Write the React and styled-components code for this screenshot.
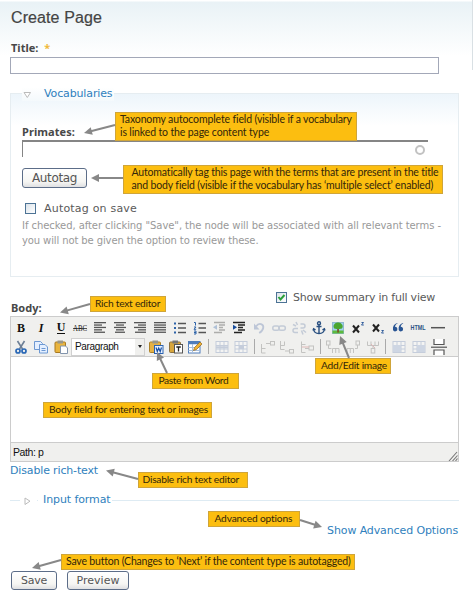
import React from 'react';
import styled, { createGlobalStyle } from 'styled-components';

const Global = createGlobalStyle`
  * { box-sizing: border-box; }
  body { margin: 0; background: #fff; }
`;

const sans = '"DejaVu Sans", Verdana, sans-serif';

const Page = styled.main`
  position: relative;
  width: 473px;
  height: 600px;
  overflow: hidden;
  padding: 8px 14px 0 10px;
  font-family: ${sans};
  background: linear-gradient(#fff 0, #fff 1px, #e9f2f6 2px, #fff 56px);
`;

const EdgeLine = styled.div`
  position: absolute;
  right: 0;
  top: 0;
  width: 1px;
  height: 70px;
  background: #d9e0e4;
`;

const Heading = styled.h1`
  margin: 0;
  padding-left: 1px;
  font: 400 16px/20px "Liberation Sans", Arial, sans-serif;
  letter-spacing: 0.1px;
  color: #444;
  -webkit-text-stroke: 0.2px #444;
`;

const Label = styled.div`
  font: 700 11px/14px "Noto Sans", Verdana, sans-serif;
  letter-spacing: ${p => p.$ls || 0}px;
  color: #484848;
  padding-left: ${p => p.$pad ?? 1}px;
  margin-top: ${p => p.$mt || 0}px;
`;

const Star = styled.span`
  color: #f0b93a;
  margin-left: 3px;
`;

const TitleInput = styled.div`
  width: 429px;
  height: 17px;
  margin-top: 2px;
  border: 1px solid #a3a8b8;
  background: #fff;
`;

const Fieldset = styled.section`
  width: 449px;
  height: 184px;
  margin-top: 19px;
  padding: 0 11px;
  border: 1px solid #e6edf1;
  background: linear-gradient(#edf5fb, #fff 32px);
`;

const Legend = styled.div`
  display: flex;
  align-items: center;
  width: 92px;
  height: 14px;
  margin-top: -7px;
  gap: 13px;
  background: linear-gradient(#fff, #f4f9fc);
`;

const Marker = styled.svg`
  display: block;
  width: 8px;
  height: 8px;
  margin: 1px 0 0 1px;
`;

const Link = styled.a`
  font: 11px/14px ${sans};
  letter-spacing: ${p => p.$ls || 0}px;
  color: #2f7fbd;
  white-space: nowrap;
`;

const AutoInput = styled.div`
  display: flex;
  justify-content: flex-end;
  align-items: center;
  width: 406px;
  height: 17px;
  margin-top: 1px;
  padding: 1px 3px 0 0;
  border-top: 2px solid #858585;
  border-left: 1px solid #858585;
  background: #fff;
`;

const Throbber = styled.div`
  width: 10px;
  height: 10px;
  border: 2px solid #c2c2c2;
  border-radius: 50%;
`;

const Button = styled.button`
  display: block;
  width: ${p => p.$w}px;
  height: ${p => p.$h || 19}px;
  margin: ${p => p.$mt || 0}px 0 0;
  padding: 0;
  border: 1px solid #5c6d88;
  border-radius: 3px;
  background: linear-gradient(#fff, #f6f6f3 70%, #dfe0e2);
  font: ${p => p.$size || 11}px/15px ${sans};
  letter-spacing: ${p => p.$ls || 0}px;
  color: #555;
`;

const CheckRow = styled.label`
  display: flex;
  align-items: center;
  gap: ${p => p.$gap}px;
  height: 14px;
  margin-top: ${p => p.$mt || 0}px;
  padding-left: ${p => p.$pad || 0}px;
  font: 11px/14px ${sans};
  letter-spacing: ${p => p.$ls || 0}px;
  color: #5a5a5a;
  white-space: nowrap;
`;

const Box = styled.svg`
  display: block;
  width: 11px;
  height: 11px;
  border: 1px solid #4c7395;
  background: linear-gradient(135deg, #dbe3ea, #fff);
  margin-bottom: 1px;
`;

const Help = styled.p`
  margin: 3px 0 0;
  font: 10px/14.5px ${sans};
  color: #999;
  white-space: nowrap;
`;

const HelpLine = styled.span`
  display: block;
  letter-spacing: ${p => p.$ls}px;
`;

const BodyHead = styled.div`
  display: flex;
  justify-content: space-between;
  width: 425px;
  height: 25px;
  margin-top: 14px;
`;

const Editor = styled.section`
  display: flex;
  flex-direction: column;
  width: 449px;
  height: 146px;
  border: 1px solid #ccc;
  background: #fff;
`;

const Toolbar = styled.div`
  height: 40px;
  padding-top: 1px;
  background: #f0f0ee;
  border-bottom: 1px solid #ccc;
`;

const ToolRow = styled.div`
  display: flex;
  align-items: center;
  height: 19px;
`;

const Tool = styled.svg`
  flex: none;
  width: 16px;
  height: 16px;
  margin: 0 ${p => p.$m ?? 1.93}px;
  opacity: ${p => (p.$off ? 0.32 : 1)};
`;

const Separator = styled.i`
  flex: none;
  width: 1px;
  height: 15px;
  margin: 0 2.7px;
  background: #aaa;
`;

const Select = styled.div`
  display: flex;
  align-items: center;
  justify-content: space-between;
  flex: none;
  width: 74px;
  height: 18px;
  margin-right: 1px;
  padding-left: 3px;
  border: 1px solid #d0d0d0;
  background: #fff;
  font: 10px/14px "Liberation Sans", Tahoma, sans-serif;
  letter-spacing: -0.35px;
  color: #111;
`;

const DropArrow = styled.span`
  display: flex;
  align-items: center;
  justify-content: center;
  width: 9px;
  height: 16px;
  background: #f0f0ee;
  &::after {
    content: '';
    border: 2px solid transparent;
    border-top: 3px solid #222;
    border-bottom: 0;
  }
`;

const Writing = styled.div`
  flex: 1;
`;

const Status = styled.div`
  display: flex;
  justify-content: space-between;
  align-items: flex-end;
  height: 19px;
  padding-left: 2px;
  border-top: 1px solid #ccc;
  background: #f0f0ee;
  font: 10.5px/17px "Liberation Sans", Tahoma, sans-serif;
  letter-spacing: -0.4px;
  color: #111;
`;

const Grip = styled.svg`
  width: 10px;
  height: 10px;
`;

const LinkLine = styled.div`
  display: flex;
  justify-content: ${p => (p.$end ? 'flex-end' : 'flex-start')};
  width: 448px;
  height: 14px;
  margin-top: ${p => p.$mt}px;
`;

const Collapsed = styled.div`
  display: flex;
  align-items: center;
  width: 449px;
  height: 14px;
  margin-top: 15px;
`;

const Rule = styled.i`
  height: 1px;
  width: ${p => p.$w || 'auto'};
  flex: ${p => (p.$w ? 'none' : 1)};
  margin: 0 ${p => p.$r || 0}px 0 ${p => p.$l || 0}px;
  background: #deebf3;
`;

const Actions = styled.div`
  display: flex;
  gap: 10px;
  margin: 33px 0 0 1px;
`;

const Note = styled.aside`
  position: absolute;
  left: ${p => p.$x}px;
  top: ${p => p.$y}px;
  width: ${p => p.$w}px;
  height: ${p => p.$h || 16}px;
  padding-left: ${p => p.$pad}px;
  border: 1px solid #cfa53a;
  background: #fcbe10;
  font: ${p => p.$size || 10.2}px/13px Lato, "Open Sans", sans-serif;
  color: #33260a;
  white-space: nowrap;
`;

const NoteLine = styled.span`
  display: block;
  letter-spacing: ${p => p.$ls}px;
`;

const Arrows = styled.svg`
  position: absolute;
  left: 0;
  top: 0;
  width: 473px;
  height: 600px;
  pointer-events: none;
`;

const bars = (list, color = '#555') =>
  list.map(([x, w], i) => <rect key={i} x={x} y={2 + i * 2.4} width={w} height="1.3" fill={color} />);

const Serif = ({ children, ...rest }) => (
  <text x="8" y="12" textAnchor="middle" fontFamily="Liberation Serif, serif" fontWeight="700" fontSize="12" fill="#111" {...rest}>{children}</text>
);

const grid = (x, y) => (
  <g fill="#fff" stroke="#6d86b5" strokeWidth="1">
    <rect x={x} y={y} width="12" height="11" />
    <path d={`M${x} ${y + 4}h12M${x} ${y + 7.5}h12M${x + 4} ${y}v11M${x + 8} ${y}v11`} />
  </g>
);

const art = {
  bold: <Serif>B</Serif>,
  italic: <Serif fontStyle="italic">I</Serif>,
  underline: <><Serif y="11">U</Serif><path d="M4 13.5h8" stroke="#111" /></>,
  strike: <><Serif fontSize="7.5" y="10.8" textLength="14" lengthAdjust="spacingAndGlyphs" fontWeight="400">ABC</Serif><path d="M1 8.5h14" stroke="#111" strokeWidth=".7" /></>,
  left: bars([[2, 12], [2, 8], [2, 12], [2, 8], [2, 11]]),
  center: bars([[2, 12], [4, 8], [2, 12], [4, 8], [3, 10]]),
  right: bars([[2, 12], [6, 8], [2, 12], [6, 8], [3, 11]]),
  full: bars([[2, 12], [2, 12], [2, 12], [2, 12], [2, 12]]),
  bullets: <><path d="M6 3.5h8M6 8h8M6 12.5h8" stroke="#555" strokeWidth="1.3" /><path d="M2 2.5h2v2H2zM2 7h2v2H2zM2 11.5h2v2H2z" fill="#2c62a8" /></>,
  numbers: <><path d="M6.5 3.5H14M6.5 8H14M6.5 12.5H14" stroke="#555" strokeWidth="1.3" /><path d="M2 2.5h1.5v3M2 7h2L2 9.3h2.2M2 11h2v3H2M2 12.5h2" stroke="#2c62a8" fill="none" /></>,
  outdent: <><path d="M3 2.5h11M8 5h6M8 7.5h4M8 10h6M3 12.5h8" stroke="#222" strokeWidth="1.5" /><path d="M6 4.8v5L2 7.3z" fill="#2c62a8" /></>,
  indent: <><path d="M2 2.5h12M7 5h7M7 7.5h5M7 10h7M3 12.5h8" stroke="#222" strokeWidth="1.5" /><path d="M2 4.8v5l4-2.5z" fill="#174c9c" /></>,
  undo: <><path d="M5 6.5C8 2 13 4 12.2 8c-.4 2.3-2 3.8-4 5" stroke="#5570a8" strokeWidth="1.8" fill="none" /><path d="M3 3.5v6h5.5z" fill="#5570a8" /></>,
  link: <g stroke="#687fa8" strokeWidth="1.5" fill="none"><rect x="1.8" y="6" width="6.5" height="4.2" rx="2" /><rect x="7.8" y="6" width="6.5" height="4.2" rx="2" /></g>,
  unlink: <g stroke="#687fa8" strokeWidth="1.5" fill="none"><path d="M7 8.5H4a2 2 0 0 0 0 4h3M9.5 4H12a2 2 0 0 1 0 4H9.5M5 2l1.5 3M2 4.5L5 6M10.5 10.5l1.5 4M12 10l3 2.5" /></g>,
  anchor: <g stroke="#284f80" strokeWidth="1.4" fill="none"><circle cx="8" cy="3.3" r="1.5" /><path d="M8 5v8.5M5.5 6.5h5M2.5 9c.3 3 2.5 4.5 5.5 4.5s5.2-1.5 5.5-4.5M2 10.5l.6-1.8 1.9 1.2M14 10.5l-.6-1.8-1.9 1.2" /></g>,
  image: <><rect x="2.5" y="2.5" width="11" height="11" fill="#9fd0f0" stroke="#8fb8cf" /><path d="M2.5 10.5h11V13.500h-11z" fill="#5dbb3c" /><path d="M7.200 8h1.700v4.500H7.200z" fill="#7b5227" /><path d="M3.500 6.500C3.500 4 6 2.500 8 2.500s4.700 1.500 4.700 4S10 9 8 9 3.500 9 3.500 6.500z" fill="#4aa52f" /></>,
  sup: <><path d="M3 5.5l6 7M9 5.5l-6 7" stroke="#222" strokeWidth="2" /><path d="M11.5 2.5h2l-2 2.5h2.3" stroke="#315d9c" fill="none" /></>,
  sub: <><path d="M3 4.5l6 7M9 4.5l-6 7" stroke="#222" strokeWidth="2" /><path d="M11.5 10.5h2l-2 2.5h2.3" stroke="#315d9c" fill="none" /></>,
  quote: <g fill="#285493"><path d="M7.3 3C4 4 2.5 6.5 3 10a2.3 2.3 0 1 0 2-3.2C5.200 5.300 6 4.200 7.500 3.600z" /><path d="M13 3C9.700 4 8.200 6.500 8.700 10a2.300 2.300 0 1 0 2-3.200c.2-1.500 1-2.600 2.500-3.200z" /></g>,
  html: <text x="8" y="10.3" textAnchor="middle" textLength="15" lengthAdjust="spacingAndGlyphs" fontFamily="Liberation Sans, sans-serif" fontWeight="700" fontSize="6.5" fill="#2c5585">HTML</text>,
  hr: <path d="M1 7.7h14" stroke="#555" strokeWidth="1.5" />,
  cut: <><path d="M4.5 2l5 8M11.5 2l-5 8" stroke="#6d7f96" strokeWidth="1.6" /><g fill="none" stroke="#2866b5" strokeWidth="1.7"><circle cx="5" cy="12" r="2" /><circle cx="11" cy="12" r="2" /></g></>,
  copy: <g fill="#e4efff" stroke="#6d98d2"><path d="M1.5 2.5h6l2 2v6h-8z" /><path d="M6.5 5.5h5.5l2.5 2.5v6h-8z" /><path d="M8.5 9.5h4M8.5 11.5h4" /></g>,
  paste: <><rect x="2" y="3" width="10.5" height="10.5" rx="1" fill="#eab53e" stroke="#a87920" /><rect x="4.5" y="1.5" width="5.5" height="3" fill="#99978b" /><path d="M7.5 7h5l2 2v5.5h-7z" fill="#fff" stroke="#8294ac" /></>,
  pasteWord: <><rect x="1.5" y="3" width="11" height="10.5" rx="1" fill="#e6b244" stroke="#ab8128" /><rect x="4.5" y="1.5" width="5.5" height="3" fill="#99978b" /><rect x="6.5" y="6.5" width="8.5" height="8" fill="#e9f2ff" stroke="#2b62b0" /><path d="M8 8.5l1.3 4 1.4-3.5 1.5 3.5 1.3-4" stroke="#174fa5" strokeWidth="1.2" fill="none" /></>,
  pasteText: <><rect x="1.5" y="3" width="11" height="10.5" rx="1" fill="#d8a63c" stroke="#8c7140" /><rect x="4.5" y="1.5" width="5.5" height="3" fill="#777" /><rect x="6.5" y="5.5" width="8" height="8.5" fill="#fff" stroke="#555" /><path d="M8.3 8h4.500M10.500 8v4.500" stroke="#222" strokeWidth="1.3" /></>,
  editTable: <><rect x="1.5" y="2.5" width="11.5" height="11.5" fill="#fff" stroke="#4f7dbb" /><path d="M1.5 4h11.5" stroke="#4f7dbb" strokeWidth="2.5" /><path d="M1.5 8.5H13M1.5 11.5H13M5.5 5v9" stroke="#a8bfdc" /><path d="M6.5 11.5l1-3L13 3l2 2-5.500 5.500z" fill="#efb333" stroke="#94641b" strokeWidth=".7" /></>,
  rowProps: <>{grid(2, 2.5)}<path d="M2 8.3h12" stroke="#6d86b5" strokeWidth="2" /></>,
  cellProps: <>{grid(2, 2.5)}<rect x="6" y="6" width="5" height="4" fill="#6d86b5" /></>,
  rowBefore: <g fill="none" stroke="#666"><path d="M1.5 5v9h4M1.5 9.5h4M6 4.5h4" /><rect x="10.5" y="2.5" width="4" height="3.5" /></g>,
  rowAfter: <g fill="none" stroke="#666"><path d="M1.5 2v8.5h4M1.5 6.5h4v-4M6 12h4" /><rect x="10.5" y="10.5" width="4" height="3.5" /></g>,
  rowDelete: <g fill="none" stroke="#666"><path d="M2.5 2.5v11h4M2.5 5.5h4M6 9.5h4" /><rect x="10" y="7" width="4.5" height="4" /><path d="M3 8h7" stroke="#b44" /></g>,
  colBefore: <g fill="none" stroke="#666"><rect x="1.5" y="2" width="3.5" height="4" /><path d="M3.5 6v3.5h3M7.5 14v-4.5h6.5v4.5M10.7 9.5v4.5" /></g>,
  colAfter: <g fill="none" stroke="#666"><rect x="11" y="2" width="3.5" height="4" /><path d="M12.5 6v3.5H10M2 14v-4.5h6.5v4.5M5.3 9.5v4.5" /></g>,
  colDelete: <g fill="none" stroke="#666"><path d="M2.5 2.5v4h11v-4M6 2.5v4M10 2.5v4M8 6.5v3" /><rect x="6.2" y="9.5" width="3.6" height="4.5" /><path d="M6 5l4 4" stroke="#b44" /></g>,
  split: <>{grid(2, 2.5)}<rect x="2" y="6" width="8" height="7" fill="#8aa1cd" /></>,
  merge: <>{grid(2, 2.5)}<rect x="6" y="6" width="8" height="7" fill="#8aa1cd" /></>,
  pageBreak: <g fill="#fff" stroke="#555" strokeWidth="1.2"><path d="M3 0v5.5h10V0M3 16v-5h10v5" /><path d="M0 8.2h16" /></g>,
};

const rowOne = ['bold', 'italic', 'underline', 'strike', 'left', 'center', 'right', 'full', 'bullets', 'numbers', '-outdent', 'indent', '-undo', '-link', '-unlink', 'anchor', 'image', 'sup', 'sub', 'quote', 'html', 'hr'];

const Icon = ({ name, m }) => {
  const off = name[0] === '-';
  return <Tool viewBox="0 0 16 16" $off={off} $m={m}>{art[off ? name.slice(1) : name]}</Tool>;
};

const icons = (names, m) => names.map(n => <Icon key={n} name={n} m={m} />);

const notes = [
  { x: 115, y: 112, w: 242, h: 29, pad: 4, size: 10.5, lines: [['Taxonomy autocomplete field (visible if a vocabulary', -0.135], ['is linked to the page content type', -0.13]] },
  { x: 123, y: 165, w: 320, h: 29, pad: 7.5, size: 10.5, lines: [['Automatically tag this page with the terms that are present in the title', -0.17], ['and body field (visible if the vocabulary has ‘multiple select’ enabled)', -0.15]] },
  { x: 90, y: 296, w: 76, pad: 4, lines: [['Rich text editor', -0.23]] },
  { x: 152, y: 373, w: 87, pad: 5.5, lines: [['Paste from Word', -0.4]] },
  { x: 43, y: 402, w: 169, pad: 5, lines: [['Body field for entering text or images', -0.18]] },
  { x: 315, y: 358, w: 76, pad: 5, lines: [['Add/Edit image', -0.25]] },
  { x: 138, y: 472, w: 110, pad: 3.5, lines: [['Disable rich text editor', -0.22]] },
  { x: 208, y: 511, w: 92, pad: 5.5, lines: [['Advanced options', -0.16]] },
  { x: 61, y: 554, w: 294, pad: 4, size: 10.5, lines: [['Save button (Changes to ‘Next’ if the content type is autotagged)', -0.19]] },
];

const pointers = [
  [115, 125, 84, 133],
  [123, 178, 91, 178],
  [90, 304, 60, 312.5],
  [167, 373, 157, 352],
  [349, 358, 340, 336],
  [138, 479, 106, 470.5],
  [300, 520, 322, 527],
  [61, 560, 32, 568],
];

const Pointer = ({ from: [x1, y1, x2, y2] }) => {
  const len = Math.hypot(x2 - x1, y2 - y1);
  const angle = (Math.atan2(y2 - y1, x2 - x1) * 180) / Math.PI;
  return (
    <g transform={`translate(${x1} ${y1}) rotate(${angle})`} fill="#888">
      <rect y="-1" width={len - 5} height="2" />
      <path d={`M${len} 0l-8 -4v8z`} />
    </g>
  );
};

export default function App() {
  return (
    <Page>
      <Global />
      <EdgeLine />
      <Heading>Create Page</Heading>
      <Label $mt={13}>Title: <Star>*</Star></Label>
      <TitleInput />

      <Fieldset>
        <Legend>
          <Marker viewBox="0 0 8 8"><path d="M1 1.5h6.500L4.300 6.500z" fill="#fff" stroke="#bbb" /></Marker>
          <Link $ls={-0.13}>Vocabularies</Link>
        </Legend>
        <Label $mt={24} $ls={0.08} $pad={0}>Primates:</Label>
        <AutoInput><Throbber /></AutoInput>
        <Button $w={65} $h={20} $mt={11} $size={12} $ls={-0.36}>Autotag</Button>
        <CheckRow $mt={14} $gap={8} $pad={3} $ls={0.2}><Box />Autotag on save</CheckRow>
        <Help>
          <HelpLine $ls={-0.064}>If checked, after clicking "Save", the node will be associated with all relevant terms -</HelpLine>
          <HelpLine $ls={-0.113}>you will not be given the option to review these.</HelpLine>
        </Help>
      </Fieldset>

      <BodyHead>
        <Label $mt={10}>Body:</Label>
        <CheckRow $gap={6} $ls={-0.236}>
          <Box viewBox="0 0 9 9"><path d="M1.500 4l2 2.500L7.500 2" fill="none" stroke="#2ba03a" strokeWidth="2" /></Box>
          Show summary in full view
        </CheckRow>
      </BodyHead>

      <Editor>
        <Toolbar>
          <ToolRow>{icons(rowOne)}</ToolRow>
          <ToolRow>
            {icons(['cut', 'copy', 'paste'], 2)}
            <Select>Paragraph<DropArrow /></Select>
            {icons(['pasteWord', 'pasteText', 'editTable'], 1.9)}
            <Separator />
            {icons(['-rowProps', '-cellProps'], 1.9)}
            <Separator />
            {icons(['-rowBefore', '-rowAfter', '-rowDelete'], 1.9)}
            <Separator />
            {icons(['-colBefore', '-colAfter', '-colDelete'], 1.9)}
            <Separator />
            {icons(['-split', '-merge', 'pageBreak'], 1.9)}
          </ToolRow>
        </Toolbar>
        <Writing />
        <Status>
          Path: p
          <Grip viewBox="0 0 10 10"><path d="M1 10l8-9M4.500 10l5-5.500M7.500 10l2-2.500" stroke="#777" strokeWidth="1.1" /></Grip>
        </Status>
      </Editor>

      <LinkLine $mt={2}><Link $ls={-0.15}>Disable rich-text</Link></LinkLine>
      <Collapsed>
        <Rule $w="10px" $r={2} />
        <Marker viewBox="0 0 8 8"><path d="M2 1v6.500L7 4.200z" fill="#fff" stroke="#bbb" /></Marker>
        <Rule $w="1px" $l={6} $r={5} />
        <Link $ls={-0.1}>Input format</Link>
        <Rule $l={2} />
      </Collapsed>
      <LinkLine $mt={17} $end><Link $ls={-0.12}>Show Advanced Options</Link></LinkLine>
      <Actions>
        <Button $w={46} $ls={-0.2}>Save</Button>
        <Button $w={62}>Preview</Button>
      </Actions>

      {notes.map(n => (
        <Note key={n.y} $x={n.x} $y={n.y} $w={n.w} $h={n.h} $pad={n.pad} $size={n.size}>
          {n.lines.map(([text, ls]) => <NoteLine key={text} $ls={ls}>{text}</NoteLine>)}
        </Note>
      ))}
      <Arrows viewBox="0 0 473 600">
        {pointers.map(p => <Pointer key={p.join()} from={p} />)}
      </Arrows>
    </Page>
  );
}
